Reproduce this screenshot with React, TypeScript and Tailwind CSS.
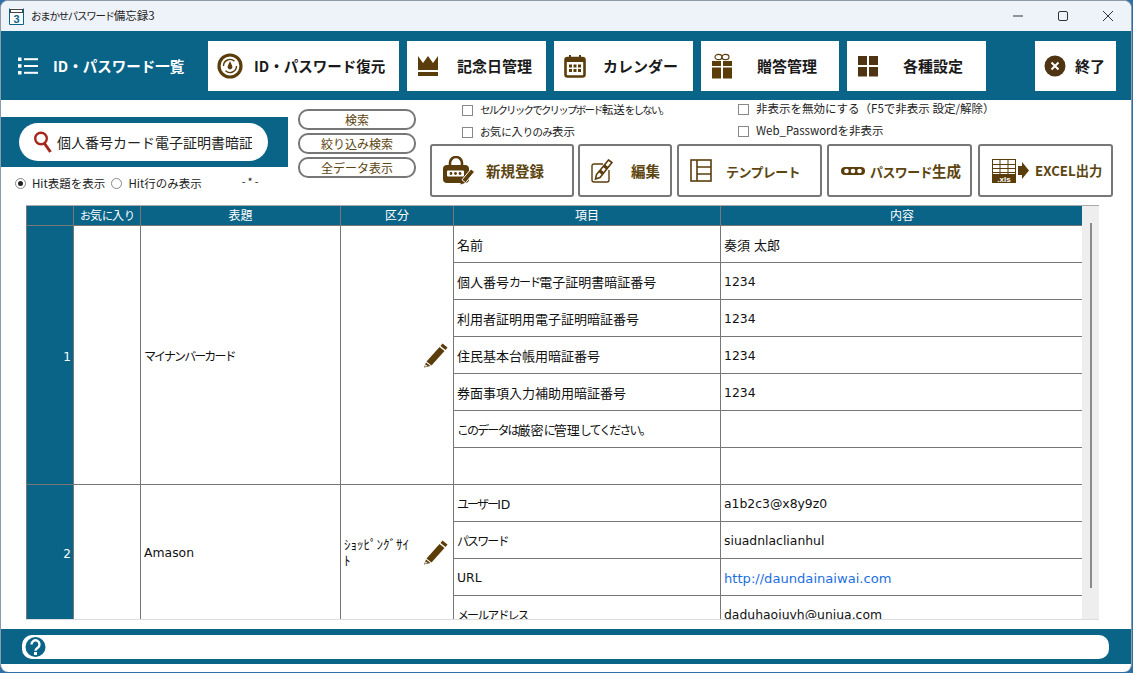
import React from "react";

const BROWN = "#5b3d0c";

function K({ t, kana, kanji = "" }: { t: string; kana: string; kanji?: string }) {
  const parts = t.split(/([\u3040-\u30ff。]+|[\u3400-\u9fff]+)/).filter(Boolean);
  return (
    <>
      {parts.map((p, i) =>
        /^[\u3040-\u30ff。]/.test(p) ? (
          <span key={i} className={kana} style={{ fontFamily: "'Noto Sans CJK JP', sans-serif" }}>{p}</span>
        ) : /^[\u3400-\u9fff]/.test(p) ? (
          <span key={i} className={kanji} style={{ fontFamily: "'Noto Sans CJK JP', sans-serif" }}>{p}</span>
        ) : (
          <span key={i}>{p}</span>
        )
      )}
    </>
  );
}

function Clock() {
  return (
    <svg width="26" height="26" viewBox="0 0 26 26">
      <circle cx="13" cy="13" r="11" fill="none" stroke={BROWN} strokeWidth="3.2" />
      <path d="M6.5 13a6.5 6.5 0 0 1 11-4.7M19.5 13a6.5 6.5 0 0 1-11 4.7" fill="none" stroke={BROWN} strokeWidth="1.4" />
      <path d="M13 8l2 4.5a2.4 2.4 0 1 1-4 0z" fill={BROWN} />
    </svg>
  );
}
function Crown() {
  return (
    <svg width="22" height="22" viewBox="0 0 22 22">
      <path d="M1 1l5 7 5-7 5 7 5-7v14H1z" fill={BROWN} />
      <rect x="1" y="17" width="20" height="4" fill={BROWN} />
    </svg>
  );
}
function Calendar() {
  return (
    <svg width="22" height="24" viewBox="0 0 22 24">
      <rect x="1.5" y="4" width="19" height="18.5" rx="2" fill="#fff" stroke={BROWN} strokeWidth="2.6" />
      <rect x="1.5" y="4" width="19" height="4" fill={BROWN} />
      <rect x="5" y="1" width="2" height="5" fill={BROWN} />
      <rect x="15" y="1" width="2" height="5" fill={BROWN} />
      {[5, 9.5, 14].map((x) =>
        [10.5, 15].map((y) => <rect key={`${x}-${y}`} x={x} y={y} width="3" height="3" fill={BROWN} />)
      )}
    </svg>
  );
}
function Gift() {
  return (
    <svg width="22" height="26" viewBox="0 0 22 26">
      <ellipse cx="7.5" cy="4" rx="3.5" ry="2.6" fill="none" stroke={BROWN} strokeWidth="1.2" />
      <ellipse cx="14.5" cy="4" rx="3.5" ry="2.6" fill="none" stroke={BROWN} strokeWidth="1.2" />
      <rect x="1" y="8" width="9" height="5" fill={BROWN} />
      <rect x="12" y="8" width="9" height="5" fill={BROWN} />
      <rect x="1" y="14.5" width="9" height="11" fill={BROWN} />
      <rect x="12" y="14.5" width="9" height="11" fill={BROWN} />
    </svg>
  );
}
function Grid4() {
  return (
    <svg width="22" height="22" viewBox="0 0 22 22" fill="#4f3413">
      <rect x="1" y="1" width="9" height="9" />
      <rect x="12" y="1" width="9" height="9" />
      <rect x="1" y="12" width="9" height="9.5" />
      <rect x="12" y="12" width="9" height="9.5" />
    </svg>
  );
}
function CloseIcon() {
  return (
    <svg width="22" height="22" viewBox="0 0 22 22">
      <circle cx="11" cy="11" r="10.5" fill="#4f3413" />
      <path d="M7.5 7.5l7 7M14.5 7.5l-7 7" stroke="#fff" strokeWidth="2" />
    </svg>
  );
}
function ListIcon() {
  return (
    <svg width="20" height="18" viewBox="0 0 20 18" fill="#fff">
      <rect x="0" y="0.5" width="3.5" height="3.5" />
      <rect x="0" y="7.2" width="3.5" height="3.5" />
      <rect x="0" y="14" width="3.5" height="3.5" />
      <rect x="6" y="1.2" width="14" height="2" />
      <rect x="6" y="8" width="14" height="2" />
      <rect x="6" y="14.8" width="14" height="2" />
    </svg>
  );
}
function Magnifier() {
  return (
    <svg width="20" height="24" viewBox="0 0 20 24">
      <circle cx="8" cy="8.5" r="5.8" fill="none" stroke="#a5281a" strokeWidth="2.4" />
      <path d="M11.5 13.5l6 8.5" stroke="#a5281a" strokeWidth="3" />
    </svg>
  );
}
function Pencil({ size = 26 }: { size?: number }) {
  return (
    <svg width={size} height={size} viewBox="0 0 26 26">
      <path d="M19.5 1.5l5 4-2 2.6-5-4z" fill={BROWN} />
      <path d="M16.5 5l5 4L8.5 23.5l-5-4z" fill={BROWN} />
      <path d="M3 20.5l4.5 3.5L1 25.5z" fill={BROWN} />
      <path d="M2.6 22.5l2 1.5-2.6.7z" fill="#fff" />
    </svg>
  );
}
function LockPen() {
  return (
    <svg width="32" height="30" viewBox="0 0 32 30">
      <path d="M7 10V7a6 6 0 0 1 12 0v3" fill="none" stroke={BROWN} strokeWidth="2.6" />
      <rect x="0" y="9" width="26" height="18" rx="4" fill={BROWN} />
      <rect x="4" y="14.5" width="17" height="6" rx="1" fill="#fff" />
      <circle cx="8" cy="17.5" r="1.4" fill={BROWN} />
      <circle cx="12.5" cy="17.5" r="1.4" fill={BROWN} />
      <circle cx="17" cy="17.5" r="1.4" fill={BROWN} />
      <path d="M28 13l3.5 2.8-9 11-3.5-3z" fill={BROWN} stroke="#fff" strokeWidth="1" />
      <path d="M18.4 24.6l3 2.6-4 1.4z" fill={BROWN} />
    </svg>
  );
}
function EditIcon() {
  return (
    <svg width="22" height="24" viewBox="0 0 22 24">
      <path d="M12 5H3a2 2 0 0 0-2 2v14a2 2 0 0 0 2 2h13a2 2 0 0 0 2-2V11" fill="none" stroke={BROWN} strokeWidth="1.4" />
      <path d="M17.5 1l3.5 2.5L9 18.5 4.5 20l1-4.5z" fill="none" stroke={BROWN} strokeWidth="1.6" />
      <path d="M7.5 13l3.5 2.8 2-2.6-3.3-2.8zM12 8l3.3 2.6 2-2.5L14 5.5z" fill={BROWN} />
    </svg>
  );
}
function TemplateIcon() {
  return (
    <svg width="22" height="23" viewBox="0 0 22 23" fill="none" stroke={BROWN} strokeWidth="1.6">
      <rect x="1" y="1" width="20" height="21" />
      <path d="M7 1v21M7 8h14M7 15h14" />
    </svg>
  );
}
function KeyIcon() {
  return (
    <svg width="24" height="10" viewBox="0 0 24 10">
      <rect x="0" y="1" width="24" height="8" rx="4" fill={BROWN} />
      <circle cx="5.5" cy="5" r="2.3" fill="#fff" />
      <circle cx="12" cy="5" r="2.3" fill="#fff" />
      <circle cx="18.5" cy="5" r="2.3" fill="#fff" />
    </svg>
  );
}
function ExcelIcon() {
  return (
    <svg width="38" height="24" viewBox="0 0 38 24">
      <rect x="0.5" y="0.5" width="23" height="23" fill="#fff" stroke={BROWN} />
      <path d="M0 5.5h24M0 9.5h24M0 13.5h24M8 0v15M16 0v15" stroke={BROWN} strokeWidth="1" />
      <rect x="0" y="15" width="24" height="9" fill={BROWN} />
      <text x="12" y="22.5" textAnchor="middle" fontSize="8" fill="#fff" fontFamily="'Liberation Sans', sans-serif">.xls</text>
      <path d="M26 7h4V3l7 8.5-7 8.5v-4h-4z" fill={BROWN} />
    </svg>
  );
}
function AppIcon() {
  return (
    <svg width="15" height="17" viewBox="0 0 15 17">
      <path d="M0.5 0.5V16.5H14.5V0.5" fill="#fff" stroke="#0a6488" />
      <rect x="1.5" y="1.5" width="12" height="3" fill="#fff" stroke="#444" strokeWidth="1" />
      <text x="7.5" y="15" textAnchor="middle" fontSize="11" fontWeight="700" fill="#0a6488" fontFamily="'Liberation Sans', sans-serif">3</text>
    </svg>
  );
}
function Help() {
  return (
    <svg width="26" height="24" viewBox="0 0 26 24">
      <ellipse cx="13" cy="12" rx="12.5" ry="12" fill="#fff" />
      <circle cx="13.5" cy="12" r="10" fill="#0a6488" />
      <path d="M9.5 9.5a4 4 0 1 1 6.2 3.2c-1.4 1-2.2 1.6-2.2 3" fill="none" stroke="#fff" strokeWidth="2.4" />
      <rect x="12" y="17" width="3" height="3" fill="#fff" />
    </svg>
  );
}

function NavButton({ w, icon, label, iconW, ml, pl, size = "text-[15px]" }: { w: string; icon: React.ReactNode; label: string; iconW: string; ml: string; pl: string; size?: string }) {
  return (
    <div className={`${w} ${ml} h-[50px] bg-white flex items-center shrink-0`}>
      <div className={`${iconW} flex items-center justify-center shrink-0`}>{icon}</div>
      <div className={`${pl} ${size} font-bold text-[#1a1a1a] whitespace-nowrap`}>{label}</div>
    </div>
  );
}

function PillButton({ label }: { label: string }) {
  return (
    <div className="h-[21px] w-[118px] rounded-[10px] border-2 border-[#777] bg-white flex items-center justify-center text-[12px] leading-none text-[#5c4510]">
      {label}
    </div>
  );
}

function Check({ children }: { children: React.ReactNode }) {
  return (
    <div className="flex items-center gap-[7px] h-[16px] whitespace-nowrap">
      <span className="w-[11px] h-[11px] border border-[#888] bg-white shrink-0" />
      <span>{children}</span>
    </div>
  );
}

function ActionButton({ w, ml, icon, label, gap, pl, size = "text-[14.5px]" }: { w: string; ml: string; icon: React.ReactNode; label: string; gap: string; pl: string; size?: string }) {
  return (
    <div className={`${w} ${ml} ${pl} ${gap} ${size} h-[53px] rounded-[3px] border-2 border-[#777] bg-white flex items-center font-bold text-[#5c4510] whitespace-nowrap shrink-0`}>
      {icon}
      <span><K t={label} kana="text-[13px] tracking-[-0.6px]" /></span>
    </div>
  );
}

const ROW1 = [
  ["名前", "奏須 太郎"],
  ["個人番号カード電子証明書暗証番号", "1234"],
  ["利用者証明用電子証明暗証番号", "1234"],
  ["住民基本台帳用暗証番号", "1234"],
  ["券面事項入力補助用暗証番号", "1234"],
  ["このデータは厳密に管理してください。", ""],
  ["", ""],
];
const ROW2 = [
  ["ユーザーID", "a1b2c3@x8y9z0"],
  ["パスワード", "siuadnlaclianhul"],
  ["URL", "http://daundainaiwai.com"],
  ["メールアドレス", "daduhaojuvh@unjua.com"],
];

const TKANA = "text-[12px] tracking-[-1.9px]";
const TKANJI = "text-[13px]";
const th = "border-x border-[#777] bg-[#0a6488] text-white font-normal text-[12px] text-center p-0 h-[19px] align-middle";
const td = "border border-[#777] p-0 align-middle";
const cellText = "pl-[3px] pt-[3px] h-[36px] flex items-center whitespace-pre overflow-hidden";

function Group({ no, title, cat, rows, shift = "" }: { no: number; title: string; cat?: string; rows: string[][]; shift?: string }) {
  return (
    <>
      {rows.map((r, i) => (
        <tr key={i}>
          {i === 0 && (
            <>
              <td rowSpan={rows.length} className={`${td} ${shift} bg-[#0a6488] text-white text-right pr-[2px] text-[12px]`}>{no}</td>
              <td rowSpan={rows.length} className={td}></td>
              <td rowSpan={rows.length} className={`${td} ${shift} pl-[3px]`}><K t={title} kana={TKANA} kanji={TKANJI} /></td>
              <td rowSpan={rows.length} className={`${td} ${shift === "pt-[3px]" ? "" : "pb-[13px]"}`}>
                <div className="flex items-center justify-between pl-[3px] pr-[4px]">
                  <span
                    className="w-[71px] leading-[16px] text-[13px] break-all"
                    style={{ fontFamily: "'Noto Sans CJK JP', sans-serif" }}
                  >
                    {cat}
                  </span>
                  <Pencil />
                </div>
              </td>
            </>
          )}
          <td className={td}><div className={cellText}><span><K t={r[0]} kana={TKANA} kanji={TKANJI} /></span></div></td>
          <td className={td}>
            <div className={`${cellText} ${r[1].startsWith("http") ? "text-[#1a6fe0] text-[13.1px]" : ""}`}>
              <span><K t={r[1]} kana={TKANA} kanji={TKANJI} /></span>
            </div>
          </td>
        </tr>
      ))}
    </>
  );
}

export default function App() {
  return (
    <div
      className="w-[1133px] h-[673px] overflow-hidden bg-[#2f6ea6]"
      style={{ fontFamily: "'Noto Sans CJK JP', sans-serif" }}
    >
      <div className="h-[672px] w-[1132px] rounded-[8px] overflow-hidden bg-white border-x border-t border-[#8a9caa] flex flex-col">
        {/* Title bar */}
        <div className="h-[30px] bg-[#eef3f9] flex items-center shrink-0">
          <div className="ml-[8px] w-[15px] flex"><AppIcon /></div>
          <div className="ml-[7px] text-[11.5px] text-[#222] flex-1 whitespace-nowrap">
            <K t="おまかせパスワード備忘録3" kana="text-[10.5px] tracking-[-1.3px]" />
          </div>
          <div className="flex items-center">
            <svg width="12" height="12" viewBox="0 0 12 12" className="mr-[33px]"><path d="M1 6h10" stroke="#333" strokeWidth="1" /></svg>
            <svg width="12" height="12" viewBox="0 0 12 12" className="mr-[33px]"><rect x="1.5" y="1.5" width="9" height="9" rx="1.5" fill="none" stroke="#333" /></svg>
            <svg width="12" height="12" viewBox="0 0 12 12" className="mr-[17px]"><path d="M1 1l10 10M11 1L1 11" stroke="#333" /></svg>
          </div>
        </div>

        {/* Nav band */}
        <div className="h-[69px] bg-[#0a6488] flex items-start pt-[10px] shrink-0">
          <div className="ml-[17px] h-[50px] w-[190px] flex items-center gap-[15px] text-white font-bold text-[14.5px] whitespace-nowrap shrink-0">
            <ListIcon />
            <span>ID・パスワード一覧</span>
          </div>
          <NavButton ml="" w="w-[191px]" iconW="w-[44px]" pl="pl-[2px]" size="text-[14.5px]" icon={<Clock />} label="ID・パスワード復元" />
          <NavButton ml="ml-[8px]" w="w-[139px]" iconW="w-[41px]" pl="pl-[9px]" icon={<Crown />} label="記念日管理" />
          <NavButton ml="ml-[8px]" w="w-[139px]" iconW="w-[42px]" pl="pl-[7px]" icon={<Calendar />} label="カレンダー" />
          <NavButton ml="ml-[8px]" w="w-[138px]" iconW="w-[41px]" pl="pl-[15px]" icon={<Gift />} label="贈答管理" />
          <NavButton ml="ml-[8px]" w="w-[139px]" iconW="w-[41px]" pl="pl-[15px]" icon={<Grid4 />} label="各種設定" />
          <NavButton ml="ml-[49px]" w="w-[81px]" iconW="w-[40px]" pl="pl-0" icon={<CloseIcon />} label="終了" />
        </div>

        {/* Toolbar */}
        <div className="h-[105px] flex shrink-0">
          <div className="w-[297px] shrink-0 pt-[17px]">
            <div className="h-[50px] w-[287px] bg-[#0a6488] flex items-center pl-[18px]">
              <div className="w-[249px] h-[38px] rounded-[19px] bg-white flex items-center pl-[14px] gap-[4px] overflow-hidden">
                <Magnifier />
                <span className="w-[195px] overflow-hidden text-[14px] text-[#222] whitespace-nowrap">個人番号カード電子証明書暗証</span>
              </div>
            </div>
            <div className="flex items-center h-[17px] mt-[8px] pl-[14px] text-[11.5px] text-[#222] whitespace-nowrap">
              <span className="w-[11px] h-[11px] rounded-full border border-[#888] flex items-center justify-center mr-[6px]">
                <span className="w-[5px] h-[5px] rounded-full bg-[#222]" />
              </span>
              <span>Hit表題を表示</span>
              <span className="w-[11px] h-[11px] rounded-full border border-[#888] ml-[6px] mr-[6px]" />
              <span>Hit行のみ表示</span>
              <span className="ml-[40px] text-[11px] tracking-[2px] -mt-[5px]">-*-</span>
            </div>
          </div>
          <div className="w-[132px] shrink-0 pt-[9px] flex flex-col gap-[3px]">
            <PillButton label="検索" />
            <PillButton label="絞り込み検索" />
            <PillButton label="全データ表示" />
          </div>
          <div className="flex-1 min-w-0">
            <div className="flex text-[11.5px] text-[#222] pl-[32px] pt-[1px] h-[44px]">
              <div className="w-[276px] flex flex-col gap-[6px] pt-[1px]">
                <Check><K t="セルクリックでクリップボード転送をしない。" kana="text-[10.5px] tracking-[-1.8px]" /></Check>
                <Check><K t="お気に入りのみ表示" kana="text-[10.5px] tracking-[-0.7px]" /></Check>
              </div>
              <div className="flex flex-col gap-[6px]">
                <Check>非表示を無効にする（F5で非表示 設定/解除）</Check>
                <Check>Web_Passwordを非表示</Check>
              </div>
            </div>
            <div className="flex">
              <ActionButton ml="" w="w-[144px]" pl="pl-[11px]" gap="gap-[11px]" icon={<LockPen />} label="新規登録" />
              <ActionButton ml="ml-[4px]" w="w-[94px]" pl="pl-[11px]" gap="gap-[18px]" icon={<EditIcon />} label="編集" />
              <ActionButton ml="ml-[5px]" w="w-[145px]" pl="pl-[11px]" gap="gap-[14px]" icon={<TemplateIcon />} label="テンプレート" />
              <ActionButton ml="ml-[5px]" w="w-[145px]" pl="pl-[12px]" gap="gap-[5px]" icon={<KeyIcon />} label="パスワード生成" />
              <ActionButton ml="ml-[6px]" w="w-[135px]" pl="pl-[12px]" gap="gap-[5px]" size="text-[13.3px]" icon={<ExcelIcon />} label="EXCEL出力" />
            </div>
          </div>
        </div>

        {/* Table area */}
        <div className="ml-[25px] w-[1073px] h-[415px] flex shrink-0 overflow-hidden border-b border-[#ddd] border-t border-t-[#aaa]">
          <div className="w-[1056px] overflow-hidden shrink-0">
            <table
              className="border-collapse table-fixed w-[1057px] text-[12.4px] text-[#111]"
              style={{ fontFamily: "'DejaVu Sans', 'Noto Sans CJK JP', sans-serif" }}
            >
              <colgroup>
                <col className="w-[47px]" />
                <col className="w-[67px]" />
                <col className="w-[200px]" />
                <col className="w-[113px]" />
                <col className="w-[267px]" />
                <col className="w-[363px]" />
              </colgroup>
              <thead>
                <tr>
                  <th className={th}></th>
                  <th className={th}><K t="お気に入り" kana="text-[11px] tracking-[-1px]" kanji="text-[12px]" /></th>
                  <th className={th}>表題</th>
                  <th className={th}>区分</th>
                  <th className={th}>項目</th>
                  <th className={th}>内容</th>
                </tr>
              </thead>
              <tbody>
                <Group no={1} title="マイナンバーカード" rows={ROW1} shift="pt-[3px]" />
                <Group no={2} title="Amason" cat="ｼｮｯﾋﾟﾝｸﾞｻｲﾄ" rows={ROW2} shift="pb-[10px]" />
              </tbody>
            </table>
          </div>
          <div className="w-[17px] bg-[#eeeeee] shrink-0 pt-[17px] flex justify-center">
            <div className="w-[2px] h-[365px] bg-[#8a8a8a]" />
          </div>
        </div>

        {/* Footer */}
        <div className="mt-[9px] h-[35px] bg-[#0a6488] flex items-start pt-[6px] pl-[21px] shrink-0">
          <div className="w-[1087px] h-[24px] rounded-[10px] bg-white flex items-center">
            <Help />
          </div>
        </div>
      </div>
    </div>
  );
}
